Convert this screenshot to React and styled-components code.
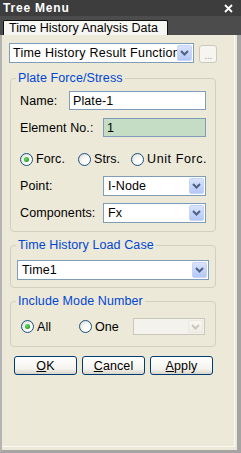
import React from 'react';
import styled, { createGlobalStyle } from 'styled-components';

const Global = createGlobalStyle`
  html, body { margin: 0; padding: 0; background: #ece9d8; }
  body { font-family: "Liberation Sans", Arial, sans-serif; font-size: 12.5px; letter-spacing: 0.1px; color: #000; }
  * { box-sizing: border-box; }
`;

const Window = styled.div`
  width: 241px;
  height: 453px;
  display: flex;
  flex-direction: column;
  overflow: hidden;
  background: #4a4a4a;
`;

const TitleBar = styled.div`
  height: 16px;
  flex: none;
  display: flex;
  align-items: center;
  justify-content: space-between;
  padding: 0 8px 0 3px;
  background: #3d3d3d;
  color: #fff;
  font-weight: bold;
  font-size: 12px;
  letter-spacing: 0.8px;
  line-height: 16px;
`;

const TabStrip = styled.div`
  height: 19px;
  flex: none;
  display: flex;
  align-items: flex-end;
  padding-left: 3px;
  background: #4c4c4c;
`;

const Tab = styled.div`
  width: 165px;
  height: 15px;
  background: #f6f6f3;
  border: 1px solid #111;
  border-bottom: none;
  border-radius: 2px 2px 0 0;
  padding-left: 5px;
  line-height: 14px;
  letter-spacing: 0;
  white-space: nowrap;
  overflow: hidden;
`;

const Page = styled.div`
  flex: 1;
  display: flex;
  background: #ece9d8;
  border-left: 2px solid #b4b4b4;
  border-right: 4px solid #a4a4a4;
  border-bottom: 3px solid #a4a4a4;
`;

const Content = styled.div`
  flex: 1;
  display: flex;
  flex-direction: column;
  padding: 8px 0 0 7px;
  margin: 0 2px 3px 0;
  border-right: 1px solid #fbfaf5;
  border-bottom: 1px solid #fbfaf5;
`;

const ComboRow = styled.div`
  display: flex;
  align-items: flex-end;
  gap: 5px;
`;

const SelectBox = styled.div`
  width: ${p => p.$w}px;
  height: ${p => p.$h || 20}px;
  flex: none;
  display: flex;
  align-items: stretch;
  border: 1px solid ${p => (p.$disabled ? '#c9c7ba' : '#7f9db9')};
  background: ${p => (p.$disabled ? '#f3f2ec' : '#fff')};
  padding: 1px;
`;

const SelectValue = styled.div`
  flex: 1;
  padding-left: ${p => p.$pl || 2}px;
  letter-spacing: ${p => p.$ls || 0.1}px;
  display: flex;
  align-items: center;
  white-space: nowrap;
  overflow: hidden;
`;

const ArrowBtn = styled.div`
  width: 15px;
  flex: none;
  display: flex;
  align-items: center;
  justify-content: center;
  border-radius: 2px;
  border: 1px solid ${p => (p.$disabled ? '#ebe9df' : '#c6d5f7')};
  background: ${p =>
    p.$disabled
      ? 'linear-gradient(#f7f6f1, #efeee6)'
      : 'linear-gradient(#d8e3fd, #b4c8f6)'};
`;

const DotsButton = styled.div`
  width: 18px;
  height: 18px;
  border: 1px solid #cbc9bc;
  border-radius: 3px;
  background: #f6f5ef;
  color: #aca899;
  font-size: 11px;
  line-height: 19px;
  text-align: center;
  letter-spacing: -0.5px;
`;

const Group = styled.fieldset`
  width: 206px;
  margin: ${p => p.$mt}px 0 0 1px;
  padding: 0;
  min-width: 0;
  border: 1px solid #d0d0bf;
  border-radius: 4px;
`;

const Legend = styled.legend`
  color: #0046d5;
  padding: 0 2px;
  margin-left: 5px;
  line-height: 14px;
  font-size: 12.5px;
`;

const GroupBody = styled.div`
  display: flex;
  flex-direction: column;
  padding: ${p => p.$pad};
`;

const Row = styled.div`
  display: flex;
  align-items: center;
  height: ${p => p.$h}px;
  margin-top: ${p => p.$mt || 0}px;
`;

const Label = styled.div`
  width: ${p => p.$w}px;
  flex: none;
  white-space: nowrap;
`;

const TextInput = styled.div`
  width: ${p => p.$w}px;
  height: 100%;
  flex: none;
  display: flex;
  align-items: center;
  padding-left: 3px;
  border: 1px solid #7f9db9;
  background: ${p => p.$bg || '#fff'};
`;

const RadioItem = styled.div`
  width: ${p => (p.$w ? `${p.$w}px` : 'auto')};
  flex: none;
  display: flex;
  align-items: center;
  gap: 3px;
  white-space: nowrap;
`;

const RadioCircle = styled.span`
  width: 13px;
  height: 13px;
  flex: none;
  border-radius: 50%;
  border: 1px solid #1c5180;
  background: radial-gradient(circle at 65% 65%, #ffffff 30%, #e4e3dc 75%, #cfcec6 100%);
  display: flex;
  align-items: center;
  justify-content: center;
  &::after {
    content: '';
    display: ${p => (p.$checked ? 'block' : 'none')};
    width: 5px;
    height: 5px;
    border-radius: 50%;
    background: radial-gradient(circle at 40% 40%, #6fe26f, #1f9e1f 70%);
  }
`;

const RadioText = styled.span`
  letter-spacing: ${p => p.$ls || 0.1}px;
`;

const ButtonRow = styled.div`
  display: flex;
  gap: 5px;
  margin: 9px 0 0 5px;
`;

const Button = styled.div`
  width: 63px;
  height: 19px;
  border: 1px solid #003c74;
  border-radius: 3px;
  background: linear-gradient(#ffffff 0%, #f4f3ee 70%, #d9d5c8 100%);
  display: flex;
  align-items: center;
  justify-content: center;
  line-height: 14px;
`;

const U = styled.span`
  text-decoration: underline;
  text-underline-offset: 1px;
`;

const Chevron = ({ color = '#4d6185' }) => (
  <svg width="9" height="6" viewBox="0 0 9 6">
    <path d="M1 1 L4.5 4.5 L8 1" fill="none" stroke={color} strokeWidth="2" />
  </svg>
);

const CloseX = () => (
  <svg width="9" height="9" viewBox="0 0 9 9">
    <path d="M1 1 L8 8 M8 1 L1 8" stroke="#fff" strokeWidth="1.8" />
  </svg>
);

const Select = ({ w, h, value, disabled, pl, ls }) => (
  <SelectBox $w={w} $h={h} $disabled={disabled}>
    <SelectValue $pl={pl} $ls={ls}>{value}</SelectValue>
    <ArrowBtn $disabled={disabled}>
      <Chevron color={disabled ? '#c9c7ba' : '#4d6185'} />
    </ArrowBtn>
  </SelectBox>
);

const Radio = ({ w, checked, ls, children }) => (
  <RadioItem $w={w}>
    <RadioCircle $checked={checked} />
    <RadioText $ls={ls}>{children}</RadioText>
  </RadioItem>
);

export default function App() {
  return (
    <>
      <Global />
      <Window>
        <TitleBar>
          <span>Tree Menu</span>
          <CloseX />
        </TitleBar>
        <TabStrip>
          <Tab>Time History Analysis Data</Tab>
        </TabStrip>
        <Page>
          <Content>
            <ComboRow>
              <Select w={185} value="Time History Result Function" ls={0.25} />
              <DotsButton>...</DotsButton>
            </ComboRow>

            <Group $mt={8}>
              <Legend>Plate Force/Stress</Legend>
              <GroupBody $pad="6px 9px 8px 9px">
                <Row $h={19}>
                  <Label $w={49}>Name:</Label>
                  <TextInput $w={137}>Plate-1</TextInput>
                </Row>
                <Row $h={19} $mt={8}>
                  <Label $w={83}>Element No.:</Label>
                  <TextInput $w={103} $bg="#c5ddc5">1</TextInput>
                </Row>
                <Row $h={14} $mt={15}>
                  <span style={{ width: 1 }} />
                  <Radio w={58} checked>Forc.</Radio>
                  <Radio w={53}>Strs.</Radio>
                  <Radio ls={0.6}>Unit Forc.</Radio>
                </Row>
                <Row $h={20} $mt={10}>
                  <Label $w={83}>Point:</Label>
                  <Select w={103} value="I-Node" pl={3} />
                </Row>
                <Row $h={20} $mt={7}>
                  <Label $w={83}>Components:</Label>
                  <Select w={103} value="Fx" pl={3} />
                </Row>
              </GroupBody>
            </Group>

            <Group $mt={6}>
              <Legend>Time History Load Case</Legend>
              <GroupBody $pad="8px 6px 7px 6px">
                <Select w={192} value="Time1" pl={3} />
              </GroupBody>
            </Group>

            <Group $mt={6}>
              <Legend>Include Mode Number</Legend>
              <GroupBody $pad="10px 6px 11px 10px">
                <Row $h={17}>
                  <Radio w={58} checked>All</Radio>
                  <Radio w={54}>One</Radio>
                  <Select w={72} h={17} value="" disabled />
                </Row>
              </GroupBody>
            </Group>

            <ButtonRow>
              <Button><U>O</U>K</Button>
              <Button><U>C</U>ancel</Button>
              <Button><U>A</U>pply</Button>
            </ButtonRow>
          </Content>
        </Page>
      </Window>
    </>
  );
}
